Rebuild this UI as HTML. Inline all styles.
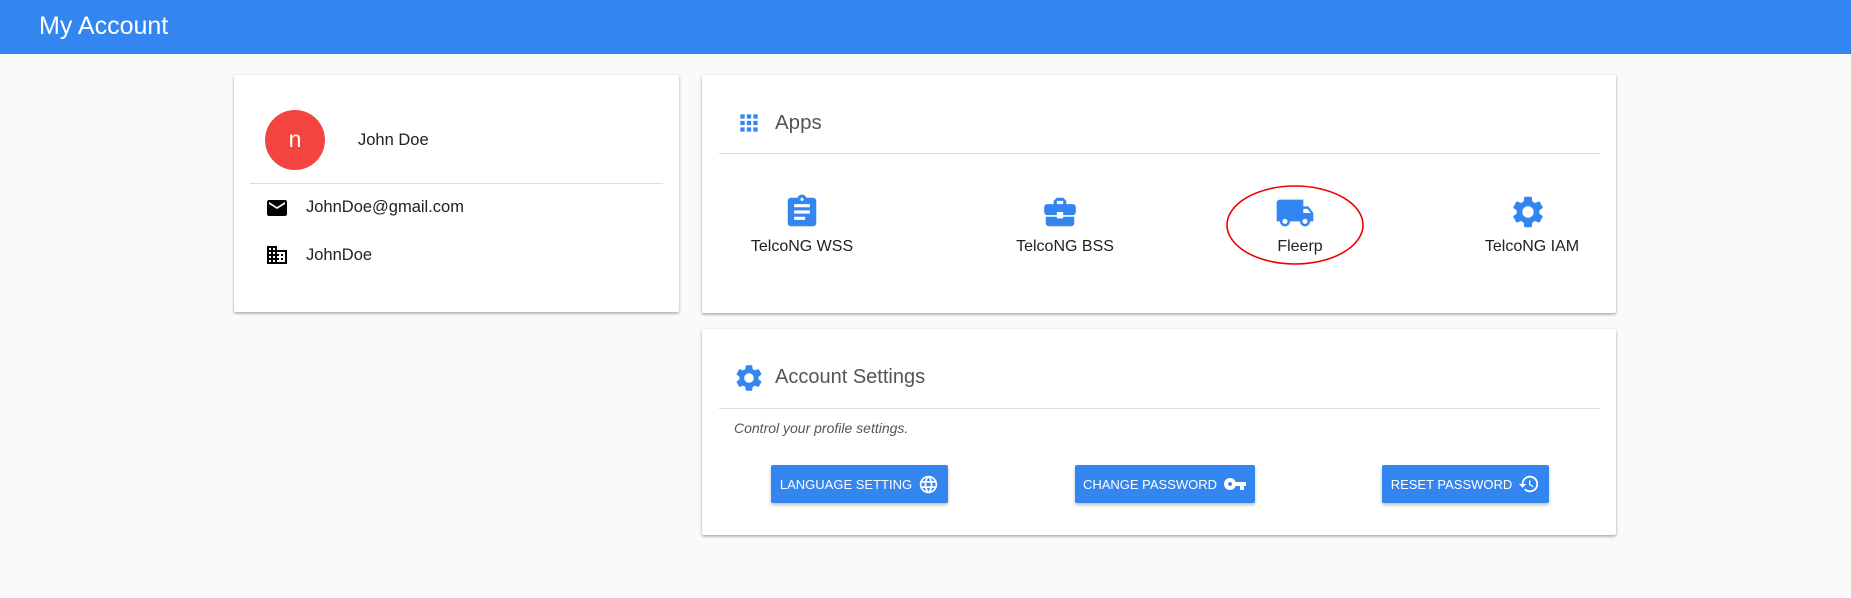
<!DOCTYPE html>
<html><head><style>
*{box-sizing:border-box;margin:0;padding:0}
body{width:1851px;height:598px;background:#fafafa;font-family:"Liberation Sans",sans-serif;position:relative;overflow:hidden;color:#212121}
.hdr{position:absolute;left:0;top:0;width:1851px;height:54px;background:#3385ef;color:#fff;font-size:25px;padding:12px 0 0 39px}
.card{position:absolute;background:#fff;border-radius:2px;box-shadow:0 1px 3px rgba(0,0,0,.25),0 2px 2px rgba(0,0,0,.12)}
.abs{position:absolute}
.hr{position:absolute;height:1px;background:#ddd}
.t{position:absolute;font-size:16.5px;white-space:nowrap}
.btn{position:absolute;top:465px;height:38px;background:#3385ef;color:#fff;font-size:13px;border-radius:2px;box-shadow:0 2px 3px rgba(0,0,0,.25);display:flex;align-items:center;justify-content:center;gap:6px}
.lbl{position:absolute;top:238px;font-size:16px;transform:translateX(-50%);white-space:nowrap}
.ico{position:absolute;top:193px;transform:translateX(-50%)}
</style></head><body>
<div class="hdr">My Account</div>

<div class="card" style="left:234px;top:75px;width:445px;height:237px"></div>
<div class="abs" style="left:265px;top:110px;width:60px;height:60px;border-radius:50%;background:#f44440;color:#fff;font-size:23px;text-align:center;line-height:58px">n</div>
<div class="t" style="left:358px;top:131px">John Doe</div>
<div class="hr" style="left:250px;top:183px;width:413px"></div>
<svg class="abs" style="left:265px;top:196px" width="24" height="24" viewBox="0 0 24 24"><path d="M20 4H4c-1.1 0-2 .9-2 2v12c0 1.1.9 2 2 2h16c1.1 0 2-.9 2-2V6c0-1.1-.9-2-2-2zm0 4l-8 5-8-5V6l8 5 8-5v2z"/></svg>
<div class="t" style="left:306px;top:198px">JohnDoe@gmail.com</div>
<svg class="abs" style="left:265px;top:243px" width="24" height="24" viewBox="0 0 24 24"><path d="M12 7V3H2v18h20V7H12zM6 19H4v-2h2v2zm0-4H4v-2h2v2zm0-4H4V9h2v2zm0-4H4V5h2v2zm4 12H8v-2h2v2zm0-4H8v-2h2v2zm0-4H8V9h2v2zm0-4H8V5h2v2zm10 12h-8v-2h2v-2h-2v-2h2v-2h-2V9h8v10zm-2-8h-2v2h2v-2zm0 4h-2v2h2v-2z"/></svg>
<div class="t" style="left:306px;top:246px">JohnDoe</div>

<div class="card" style="left:702px;top:75px;width:914px;height:238px"></div>
<svg class="abs" style="left:736px;top:110px" width="26" height="26" viewBox="0 0 24 24" fill="#3385ef"><path d="M4 8h4V4H4v4zm6 12h4v-4h-4v4zm-6 0h4v-4H4v4zm0-6h4v-4H4v4zm6 0h4v-4h-4v4zm6-10v4h4V4h-4zm-6 4h4V4h-4v4zm6 6h4v-4h-4v4zm0 6h4v-4h-4v4z"/></svg>
<div class="t" style="left:775px;top:111px;font-size:20.5px;color:#555">Apps</div>
<div class="hr" style="left:719px;top:153px;width:881px"></div>
<svg class="ico" style="left:802px" width="38" height="38" viewBox="0 0 24 24" fill="#3385ef"><path d="M19 3h-4.18C14.4 1.84 13.3 1 12 1s-2.4.84-2.82 2H5c-1.1 0-2 .9-2 2v14c0 1.1.9 2 2 2h14c1.1 0 2-.9 2-2V5c0-1.1-.9-2-2-2zm-7 0c.55 0 1 .45 1 1s-.45 1-1 1-1-.45-1-1 .45-1 1-1zm4 14H7v-2h7v2zm3-4H7v-2h10v2zm0-4H7V7h10v2z"/></svg>
<div class="lbl" style="left:802px">TelcoNG WSS</div>
<svg class="ico" style="left:1060px" width="38" height="38" viewBox="0 0 24 24" fill="#3385ef"><path d="M10 16v-1H3.01L3 19c0 1.11.89 2 2 2h14c1.11 0 2-.89 2-2v-4h-7v1h-4zm10-9h-4.01V5l-2-2h-4l-2 2v2H4c-1.1 0-2 .9-2 2v3c0 1.11.89 2 2 2h6v-2h4v2h6c1.1 0 2-.9 2-2V9c0-1.1-.9-2-2-2zm-6 0h-4V5h4v2z"/></svg>
<div class="lbl" style="left:1065px">TelcoNG BSS</div>
<svg class="ico" style="left:1295px" width="40" height="40" viewBox="0 0 24 24" fill="#3385ef"><path d="M20 8h-3V4H3c-1.1 0-2 .9-2 2v11h2c0 1.66 1.34 3 3 3s3-1.34 3-3h6c0 1.66 1.34 3 3 3s3-1.34 3-3h2v-5l-3-4zM6 18.5c-.83 0-1.5-.67-1.5-1.5s.67-1.5 1.5-1.5 1.5.67 1.5 1.5-.67 1.5-1.5 1.5zm13.5-9l1.96 2.5H17V9.5h2.5zm-1.5 9c-.83 0-1.5-.67-1.5-1.5s.67-1.5 1.5-1.5 1.5.67 1.5 1.5-.67 1.5-1.5 1.5z"/></svg>
<div class="lbl" style="left:1300px">Fleerp</div>
<svg class="abs" style="left:1224px;top:184px" width="142" height="82"><ellipse cx="71" cy="41" rx="68" ry="39" fill="none" stroke="#e00" stroke-width="1.6"/></svg>
<svg class="ico" style="left:1528px" width="38" height="38" viewBox="0 0 24 24" fill="#3385ef"><path d="M19.14 12.94c.04-.3.06-.61.06-.94 0-.32-.02-.64-.07-.94l2.03-1.58c.18-.14.23-.41.12-.61l-1.92-3.32c-.12-.22-.37-.29-.59-.22l-2.39.96c-.5-.38-1.03-.7-1.62-.94l-.36-2.54c-.04-.24-.24-.41-.48-.41h-3.840c-.24 0-.43.17-.47.41l-.36 2.54c-.59.24-1.13.57-1.62.94l-2.39-.96c-.22-.08-.47 0-.59.22L2.74 8.87c-.12.21-.08.47.12.61l2.03 1.58c-.05.3-.09.63-.09.94s.02.64.07.94l-2.03 1.58c-.18.14-.23.41-.12.61l1.92 3.32c.12.22.37.29.59.22l2.39-.96c.5.38 1.03.7 1.62.94l.36 2.54c.05.24.24.41.48.41h3.84c.24 0 .44-.17.47-.41l.36-2.54c.59-.24 1.13-.56 1.62-.94l2.39.96c.22.08.47 0 .59-.22l1.92-3.32c.12-.22.07-.47-.12-.61l-2.01-1.58zM12 15.6c-1.98 0-3.6-1.62-3.6-3.6s1.62-3.6 3.6-3.6 3.6 1.62 3.6 3.6-1.62 3.6-3.6 3.6z"/></svg>
<div class="lbl" style="left:1532px">TelcoNG IAM</div>

<div class="card" style="left:702px;top:329px;width:914px;height:206px"></div>
<svg class="abs" style="left:733px;top:362px" width="32" height="32" viewBox="0 0 24 24" fill="#3385ef"><path d="M19.14 12.94c.04-.3.06-.61.06-.94 0-.32-.02-.64-.07-.94l2.03-1.58c.18-.14.23-.41.12-.61l-1.92-3.32c-.12-.22-.37-.29-.59-.22l-2.39.96c-.5-.38-1.03-.7-1.62-.94l-.36-2.54c-.04-.24-.24-.41-.48-.41h-3.84c-.24 0-.43.17-.47.41l-.36 2.54c-.59.24-1.13.57-1.62.94l-2.39-.96c-.22-.08-.47 0-.59.22L2.74 8.87c-.12.21-.08.47.12.61l2.03 1.58c-.05.3-.09.63-.09.94s.02.64.07.94l-2.03 1.58c-.18.14-.23.41-.12.61l1.92 3.32c.12.22.37.29.59.22l2.39-.96c.5.38 1.03.7 1.62.94l.36 2.54c.05.24.24.41.48.41h3.84c.24 0 .44-.17.47-.41l.36-2.54c.59-.24 1.13-.56 1.62-.94l2.39.96c.22.08.47 0 .59-.22l1.92-3.32c.12-.22.07-.47-.12-.61l-2.01-1.58zM12 15.6c-1.98 0-3.6-1.62-3.6-3.6s1.62-3.6 3.6-3.6 3.6 1.62 3.6 3.6-1.62 3.6-3.6 3.6z"/></svg>
<div class="t" style="left:775px;top:366px;font-size:20px;color:#555">Account Settings</div>
<div class="hr" style="left:719px;top:408px;width:881px"></div>
<div class="t" style="left:734px;top:420px;font-size:14px;font-style:italic;color:#555">Control your profile settings.</div>
<div class="btn" style="left:771px;width:177px">LANGUAGE SETTING <svg width="21" height="21" viewBox="0 0 24 24" fill="#fff"><path d="M11.99 2C6.47 2 2 6.48 2 12s4.47 10 9.99 10C17.52 22 22 17.52 22 12S17.52 2 11.99 2zm6.93 6h-2.95c-.32-1.25-.78-2.45-1.38-3.56 1.84.63 3.37 1.910 4.33 3.56zM12 4.04c.83 1.2 1.48 2.53 1.91 3.96h-3.82c.43-1.43 1.08-2.76 1.91-3.96zM4.26 14C4.1 13.36 4 12.69 4 12s.1-1.36.26-2h3.38c-.08.66-.14 1.32-.14 2s.06 1.34.14 2H4.26zm.82 2h2.95c.32 1.25.78 2.45 1.38 3.56-1.84-.63-3.37-1.9-4.33-3.56zm2.95-8H5.08c.96-1.66 2.49-2.93 4.33-3.56C8.81 5.55 8.35 6.75 8.03 8zM12 19.96c-.83-1.2-1.48-2.53-1.91-3.96h3.82c-.43 1.43-1.08 2.76-1.91 3.96zM14.34 14H9.66c-.09-.66-.16-1.32-.16-2s.07-1.35.16-2h4.68c.09.65.16 1.32.16 2s-.07 1.34-.16 2zm.25 5.56c.6-1.11 1.06-2.31 1.38-3.56h2.95c-.96 1.65-2.49 2.93-4.33 3.56zM16.36 14c.08-.66.14-1.32.14-2s-.06-1.34-.14-2h3.38c.16.64.26 1.31.26 2s-.1 1.36-.26 2h-3.38z"/></svg></div>
<div class="btn" style="left:1075px;width:180px">CHANGE PASSWORD <svg width="24" height="24" viewBox="0 0 24 24" fill="#fff"><path d="M12.65 10C11.83 7.67 9.61 6 7 6c-3.31 0-6 2.690-6 6s2.69 6 6 6c2.61 0 4.83-1.67 5.65-4H17v4h4v-4h2v-4H12.65zM7 14c-1.1 0-2-.9-2-2s.9-2 2-2 2 .9 2 2-.9 2-2 2z"/></svg></div>
<div class="btn" style="left:1382px;width:167px">RESET PASSWORD <svg width="22" height="22" viewBox="0 0 24 24" fill="#fff"><path d="M13 3c-4.97 0-9 4.03-9 9H1l3.89 3.89.07.14L9 12H6c0-3.87 3.13-7 7-7s7 3.13 7 7-3.13 7-7 7c-1.93 0-3.68-.79-4.94-2.06l-1.42 1.42C8.27 19.99 10.51 21 13 21c4.97 0 9-4.03 9-9s-4.03-9-9-9zm-1 5v5l4.28 2.54.72-1.21-3.5-2.08V8H12z"/></svg></div>
</body></html>
